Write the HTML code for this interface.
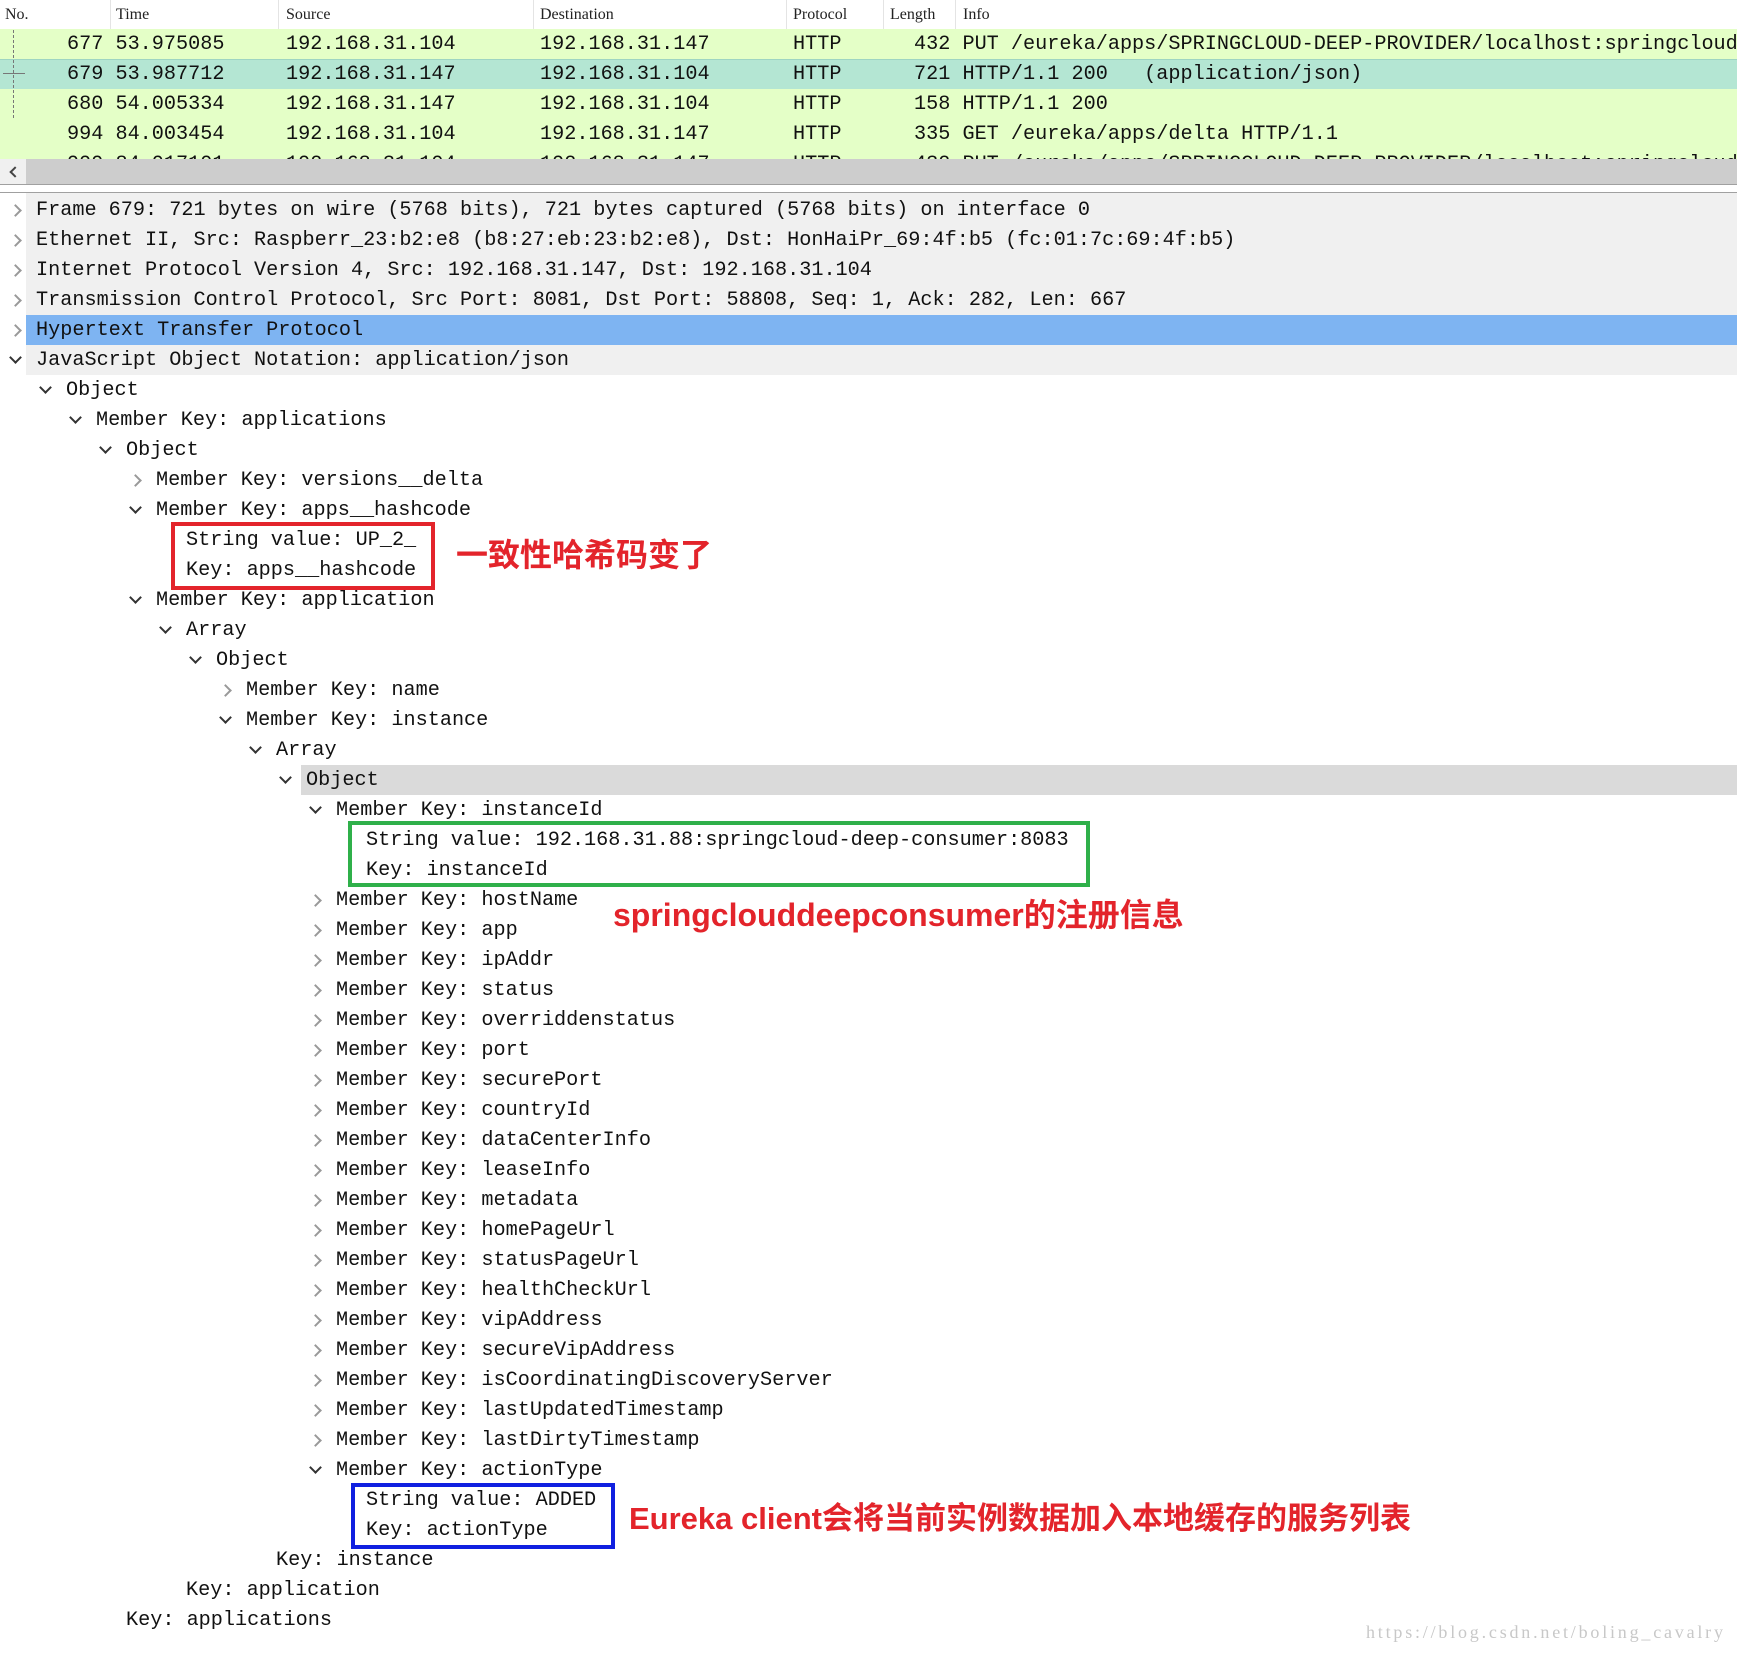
<!DOCTYPE html>
<html><head><meta charset="utf-8"><style>
body{margin:0;width:1737px;height:1655px;overflow:hidden;background:#fff;position:relative;font-family:"Liberation Mono",monospace;font-size:20.2px;color:#111;}
.a{position:absolute;white-space:pre;}
.hd{position:absolute;top:0;height:29px;line-height:29px;font-family:"Liberation Serif",serif;font-size:16px;color:#222;}
.sep{position:absolute;top:0;height:29px;width:1px;background:#e4e4e4;}
.pr{position:absolute;left:0;width:1737px;height:30px;line-height:31px;background:#e4ffc7;}
.r{position:absolute;left:0;width:1737px;height:30px;line-height:32px;}
.t{position:absolute;top:0;white-space:pre;}
.ar{position:absolute;top:11px;width:7px;height:7px;border-right:2px solid #999;border-bottom:2px solid #999;transform:rotate(-45deg);}
.ar.o{border-color:#333;transform:rotate(45deg);top:8px;}
.ann{position:absolute;font-family:"Liberation Sans","Noto Sans CJK SC",sans-serif;font-weight:bold;color:#e3242b;white-space:nowrap;}
.box{position:absolute;}
</style></head><body>
<div class="hd" style="left:5px">No.</div><div class="sep" style="left:110px"></div>
<div class="hd" style="left:116px">Time</div><div class="sep" style="left:278px"></div>
<div class="hd" style="left:286px">Source</div><div class="sep" style="left:533px"></div>
<div class="hd" style="left:540px">Destination</div><div class="sep" style="left:786px"></div>
<div class="hd" style="left:793px">Protocol</div><div class="sep" style="left:883px"></div>
<div class="hd" style="left:890px">Length</div><div class="sep" style="left:955px"></div>
<div class="hd" style="left:963px">Info</div>

<div class="pr" style="top:29px"><span class="t" style="left:67px">677 53.975085</span><span class="t" style="left:286px">192.168.31.104</span><span class="t" style="left:540px">192.168.31.147</span><span class="t" style="left:793px">HTTP</span><span class="t" style="left:914px">432 PUT /eureka/apps/SPRINGCLOUD-DEEP-PROVIDER/localhost:springcloud</span></div>
<div class="pr" style="top:59px;background:#b4e6d3;border-top:1px solid #9ed5c2;box-sizing:border-box"><span class="t" style="left:67px;top:-1px">679 53.987712</span><span class="t" style="left:286px;top:-1px">192.168.31.147</span><span class="t" style="left:540px;top:-1px">192.168.31.104</span><span class="t" style="left:793px;top:-1px">HTTP</span><span class="t" style="left:914px;top:-1px">721 HTTP/1.1 200   (application/json)</span></div>
<div class="pr" style="top:89px"><span class="t" style="left:67px">680 54.005334</span><span class="t" style="left:286px">192.168.31.147</span><span class="t" style="left:540px">192.168.31.104</span><span class="t" style="left:793px">HTTP</span><span class="t" style="left:914px">158 HTTP/1.1 200</span></div>
<div class="pr" style="top:119px"><span class="t" style="left:67px">994 84.003454</span><span class="t" style="left:286px">192.168.31.104</span><span class="t" style="left:540px">192.168.31.147</span><span class="t" style="left:793px">HTTP</span><span class="t" style="left:914px">335 GET /eureka/apps/delta HTTP/1.1</span></div>
<div class="pr" style="top:149px;height:10px;overflow:hidden"><span class="t" style="left:67px">999 84.017101</span><span class="t" style="left:286px">192.168.31.104</span><span class="t" style="left:540px">192.168.31.147</span><span class="t" style="left:793px">HTTP</span><span class="t" style="left:914px">432 PUT /eureka/apps/SPRINGCLOUD-DEEP-PROVIDER/localhost:springcloud</span></div>
<div class="a" style="left:13px;top:30px;width:0;height:88px;border-left:1px dashed #777"></div>
<div class="a" style="left:3px;top:73px;width:22px;height:1px;background:#777"></div>
<div class="a" style="left:0;top:159px;width:1737px;height:25px;background:#cdcdcd"></div>
<div class="a" style="left:0;top:159px;width:26px;height:25px;background:#f0f0f0"></div>
<div class="a" style="left:11px;top:168px;width:6px;height:6px;border-left:2px solid #444;border-bottom:2px solid #444;transform:rotate(45deg)"></div>
<div class="a" style="left:0;top:184px;width:1737px;height:1px;background:#a0a0a0"></div>
<div class="a" style="left:0;top:192px;width:1737px;height:1px;background:#a0a0a0"></div>
<div class="a" style="left:26px;top:193px;width:1711px;height:182px;background:#f0f0f0"></div>
<div class="a" style="left:26px;top:315px;width:1711px;height:30px;background:#7eb4f2"></div>
<div class="a" style="left:301px;top:765px;width:1436px;height:30px;background:#dadada"></div>

<div id="tree"></div>
<script>
var rows=[
[0,'c','Frame 679: 721 bytes on wire (5768 bits), 721 bytes captured (5768 bits) on interface 0'],
[0,'c','Ethernet II, Src: Raspberr_23:b2:e8 (b8:27:eb:23:b2:e8), Dst: HonHaiPr_69:4f:b5 (fc:01:7c:69:4f:b5)'],
[0,'c','Internet Protocol Version 4, Src: 192.168.31.147, Dst: 192.168.31.104'],
[0,'c','Transmission Control Protocol, Src Port: 8081, Dst Port: 58808, Seq: 1, Ack: 282, Len: 667'],
[0,'c','Hypertext Transfer Protocol'],
[0,'o','JavaScript Object Notation: application/json'],
[1,'o','Object'],[2,'o','Member Key: applications'],[3,'o','Object'],
[4,'c','Member Key: versions__delta'],[4,'o','Member Key: apps__hashcode'],
[5,'','String value: UP_2_'],[5,'','Key: apps__hashcode'],
[4,'o','Member Key: application'],[5,'o','Array'],[6,'o','Object'],
[7,'c','Member Key: name'],[7,'o','Member Key: instance'],[8,'o','Array'],[9,'o','Object'],
[10,'o','Member Key: instanceId'],
[11,'','String value: 192.168.31.88:springcloud-deep-consumer:8083'],[11,'','Key: instanceId']];
['hostName','app','ipAddr','status','overriddenstatus','port','securePort','countryId','dataCenterInfo','leaseInfo','metadata','homePageUrl','statusPageUrl','healthCheckUrl','vipAddress','secureVipAddress','isCoordinatingDiscoveryServer','lastUpdatedTimestamp','lastDirtyTimestamp'].forEach(function(k){rows.push([10,'c','Member Key: '+k]);});
rows.push([10,'o','Member Key: actionType'],[11,'','String value: ADDED'],[11,'','Key: actionType'],[8,'','Key: instance'],[5,'','Key: application'],[3,'','Key: applications']);
var h='';
rows.forEach(function(r,i){var x=36+30*r[0];var top=195+30*i;
h+='<div class="r" style="top:'+top+'px">';
if(r[1])h+='<div class="ar '+(r[1]=='o'?'o':'')+'" style="left:'+(x-25)+'px"></div>';
h+='<span class="t" style="left:'+x+'px">'+r[2]+'</span></div>';});
document.getElementById('tree').innerHTML=h;
</script>

<div class="box" style="left:171px;top:522px;width:256px;height:60px;border:4px solid #e3242b"></div>
<div class="box" style="left:348px;top:821px;width:734px;height:58px;border:4px solid #2fb04a"></div>
<div class="box" style="left:351px;top:1483px;width:256px;height:58px;border:4px solid #1020e0"></div>
<div class="ann" style="left:456px;top:530px;font-size:32px">一致性哈希码变了</div>
<div class="ann" style="left:613px;top:890px;font-size:32px">springclouddeepconsumer的注册信息</div>
<div class="ann" style="left:629px;top:1493px;font-size:31px">Eureka client会将当前实例数据加入本地缓存的服务列表</div>
<div class="a" style="left:1366px;top:1622px;font-family:'Liberation Serif',serif;font-size:18px;letter-spacing:2.8px;color:#c8c8c8">https://blog.csdn.net/boling_cavalry</div>
</body></html>
